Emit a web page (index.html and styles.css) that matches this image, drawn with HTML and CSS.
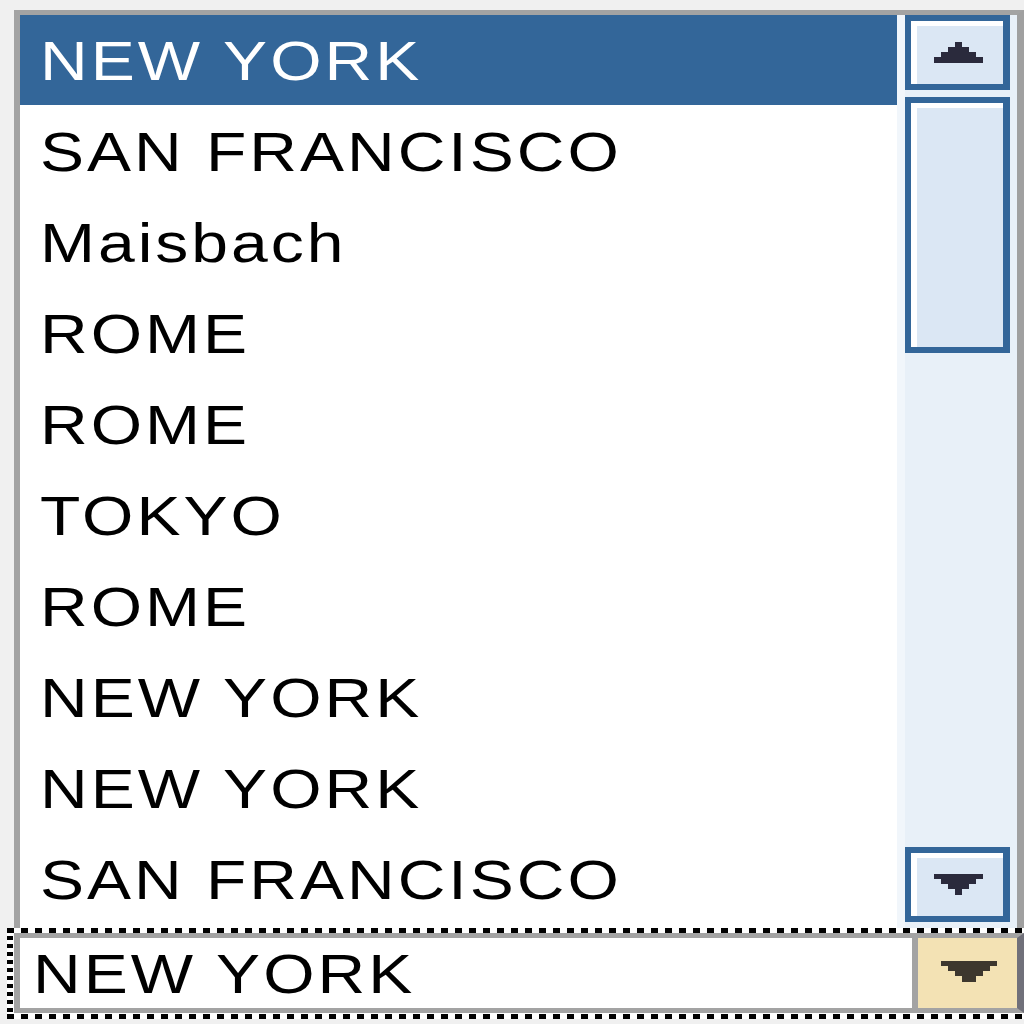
FILE: index.html
```html
<!DOCTYPE html>
<html>
<head>
<meta charset="utf-8">
<link rel="stylesheet" href="styles.css">
</head>
<body>
<div class="listbox">
  <ul class="list">
    <li class="row selected"><span class="txt">NEW YORK</span></li>
    <li class="row"><span class="txt">SAN FRANCISCO</span></li>
    <li class="row"><span class="txt">Maisbach</span></li>
    <li class="row"><span class="txt">ROME</span></li>
    <li class="row"><span class="txt">ROME</span></li>
    <li class="row"><span class="txt">TOKYO</span></li>
    <li class="row"><span class="txt">ROME</span></li>
    <li class="row"><span class="txt">NEW YORK</span></li>
    <li class="row"><span class="txt">NEW YORK</span></li>
    <li class="row"><span class="txt">SAN FRANCISCO</span></li>
  </ul>
  <div class="scrollbar">
    <div class="sb-btn">
      <svg class="arrow" width="49" height="21" viewBox="0 0 49 21"><polygon points="21,0 28,0 28,5 35,5 35,10 42,10 42,15 49,15 49,21 0,21 0,15 7,15 7,10 14,10 14,5 21,5"/></svg>
    </div>
    <div class="sb-thumb"></div>
    <div class="sb-space"></div>
    <div class="sb-btn">
      <svg class="arrow" width="49" height="21" viewBox="0 0 49 21"><polygon points="0,0 49,0 49,5 42,5 42,10 35,10 35,15 28,15 28,21 21,21 21,15 14,15 14,10 7,10 7,5 0,5"/></svg>
    </div>
  </div>
</div>
<div class="combo-focus">
  <div class="combo">
    <div class="combo-text"><span class="txt">NEW YORK</span></div>
    <div class="combo-btn">
      <svg class="carrow" width="56" height="21" viewBox="0 0 56 21"><polygon points="0,0 56,0 56,5 49,5 49,10 42,10 42,15 35,15 35,21 21,21 21,15 14,15 14,10 7,10 7,5 0,5"/></svg>
    </div>
  </div>
</div>
</body>
</html>
```
FILE: styles.css
```css
html, body {
  margin: 0;
  padding: 0;
  width: 1024px;
  height: 1024px;
  overflow: hidden;
  background: #f0f0f0;
}
body {
  padding-top: 10px;
  box-sizing: border-box;
  font-family: "Liberation Sans", Arial, sans-serif;
}
.txt {
  display: inline-block;
  transform: scaleX(1.2);
  transform-origin: left center;
  letter-spacing: 2.5px;
}
.listbox {
  margin-left: 14px;
  width: 1010px;
  height: 918px;
  box-sizing: border-box;
  border-top: 5px solid #a3a3a3;
  border-left: 6px solid #a3a3a3;
  border-right: 7px solid #a0a0a0;
  display: flex;
  background: #fff;
}
.list {
  list-style: none;
  margin: 0;
  padding: 0;
  width: 877px;
  background: #fff;
}
.row {
  height: 91px;
  line-height: 93px;
  padding-left: 20px;
  font-size: 55px;
  color: #000;
  white-space: nowrap;
}
.row.selected {
  height: 90px;
  line-height: 92px;
  margin-bottom: 1px;
  background: #336699;
  color: #fff;
}
.scrollbar {
  width: 120px;
  box-sizing: border-box;
  padding: 0 7px 6px 8px;
  background: linear-gradient(90deg, #f1f6fb 0 8px, #e8f0f8 8px);
  display: flex;
  flex-direction: column;
}
.sb-btn, .sb-thumb {
  box-sizing: border-box;
  border: 6px solid #336699;
  border-right-width: 7px;
  background: #dbe7f4;
  box-shadow: inset 6px 5px 0 #fff;
}
.sb-btn {
  height: 75px;
  display: flex;
  align-items: center;
  justify-content: center;
}
.sb-thumb {
  height: 256px;
  margin-top: 7px;
}
.sb-space {
  flex: 1;
}
.arrow {
  display: block;
  fill: #2a2a3c;
  margin-left: 2px;
}
.combo-focus {
  margin-left: 7px;
  width: 1030px;
  box-sizing: border-box;
  padding: 5px 0 6px 7px;
  background-color: #fff;
  background-image:
    repeating-linear-gradient(90deg, #000 0 7px, transparent 7px 14px),
    repeating-linear-gradient(90deg, #000 0 7px, transparent 7px 14px),
    repeating-linear-gradient(180deg, #000 0 4px, transparent 4px 8px);
  background-size: 100% 5px, 100% 5px, 6px 100%;
  background-position: left top, left bottom, left top;
  background-repeat: no-repeat;
}
.combo {
  display: flex;
  height: 80px;
  width: 1010px;
  box-sizing: border-box;
  border-top: 5px solid #a3a3a3;
  border-bottom: 5px solid #a3a3a3;
  border-left: 6px solid #a3a3a3;
  border-right: 7px solid #70707a;
  background: #fff;
}
.combo-text {
  flex: 1;
  padding-left: 13px;
  font-size: 55px;
  line-height: 72px;
  color: #000;
  white-space: nowrap;
}
.combo-btn {
  width: 105px;
  box-sizing: border-box;
  border-left: 6px solid #a3a3a3;
  background: #f3e2b4;
  display: flex;
  align-items: center;
  justify-content: center;
}
.carrow {
  display: block;
  fill: #3d372e;
  margin-top: -4px;
  margin-left: 2px;
}
```
